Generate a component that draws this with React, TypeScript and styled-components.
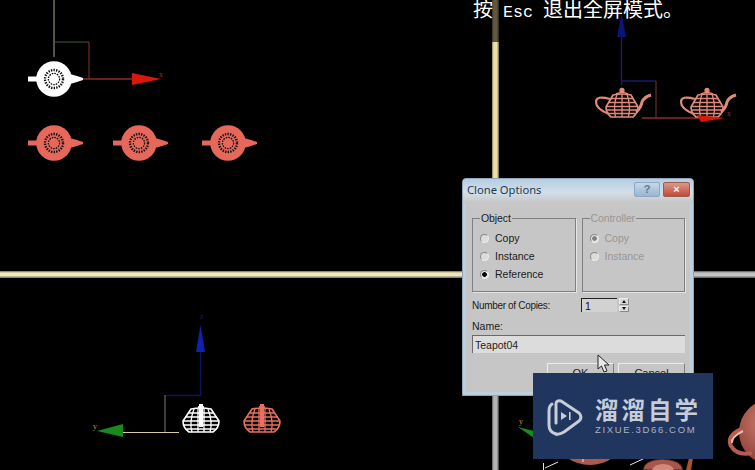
import React from "react";
import styled, { createGlobalStyle } from "styled-components";

const GlobalStyle = createGlobalStyle`
  html, body {
    margin: 0;
    padding: 0;
    background: #000;
  }
`;

const Stage = styled.div`
  position: relative;
  width: 755px;
  height: 470px;
  overflow: hidden;
  background: #000;
  display: grid;
  grid-template-columns: 492px 7px 256px;
  grid-template-rows: 271px 7px 192px;
`;

const Viewport = styled.svg`
  display: block;
  width: 100%;
  height: 100%;
`;

const VBar = styled.div<{ $tone: "cream" | "grey" }>`
  background: ${(p) =>
    p.$tone === "cream"
      ? "linear-gradient(90deg, rgba(0,0,0,0.45) 0, transparent 25%, transparent 70%, rgba(0,0,0,0.6) 100%), linear-gradient(180deg, #5e5940 0, #5e5940 42px, #ece1a4 42px, #ece1a4 100%)"
      : "linear-gradient(90deg, #555 0, #b4b4b4 25%, #b4b4b4 70%, #333 100%)"};
`;

const HBar = styled.div<{ $tone: "cream" | "grey" }>`
  background: ${(p) =>
    p.$tone === "cream"
      ? "linear-gradient(180deg, #6e6a4c 0, #efe8bc 28%, #efe8bc 65%, #6e6a4c 100%)"
      : "linear-gradient(180deg, #555 0, #c4c4c4 28%, #c4c4c4 65%, #555 100%)"};
`;

const Caption = styled.div`
  position: absolute;
  left: 473px;
  top: 0;
  color: #fff;
  font-family: "Noto Sans CJK SC", sans-serif;
  font-size: 20px;
  line-height: 18px;
  white-space: pre;
`;

const CaptionLatin = styled.span`
  font-family: "Liberation Mono", monospace;
  font-size: 16.67px;
`;

const Dialog = styled.div`
  position: absolute;
  left: 462px;
  top: 178px;
  width: 232px;
  height: 218px;
  box-sizing: border-box;
  display: flex;
  flex-direction: column;
  background: #c6c6c6;
  border: 1px solid #8fa4b6;
  border-radius: 4px 4px 0 0;
  box-shadow: inset 3px 0 0 #bcd0e0, inset -3px 0 0 #bcd0e0, inset 0 -3px 0 #bcd0e0;
  font-family: "Liberation Sans", Arial, sans-serif;
  font-size: 10px;
  color: #1c1c1c;
`;

const TitleBar = styled.div`
  flex: none;
  height: 24px;
  display: flex;
  align-items: center;
  gap: 3px;
  padding: 0 3px 4px 4px;
  box-sizing: border-box;
  background: linear-gradient(180deg, #b3cde3 0, #d3dfe8 55%, #c6c6c6 100%);
  border-radius: 3px 3px 0 0;
`;

const TitleText = styled.div`
  flex: 1;
  font-family: "Noto Sans", sans-serif;
  font-size: 11.2px;
  color: #1d3b52;
`;

const CaptionButton = styled.div<{ $kind: "help" | "close" }>`
  width: ${(p) => (p.$kind === "help" ? "26px" : "27px")};
  height: 15px;
  box-sizing: border-box;
  display: flex;
  align-items: center;
  justify-content: center;
  border: 1px solid ${(p) => (p.$kind === "help" ? "#8fa9c2" : "#9c5a50")};
  border-radius: 2px;
  color: ${(p) => (p.$kind === "help" ? "#64788c" : "#f4f4f4")};
  font-weight: bold;
  font-size: 11px;
  background: ${(p) =>
    p.$kind === "help"
      ? "linear-gradient(180deg, #c4d8ea, #98b6d2)"
      : "linear-gradient(180deg, #dc9a88, #c04a38)"};
`;

const DialogBody = styled.div`
  flex: 1;
  display: flex;
  flex-direction: column;
  padding: 9px 8px 0 9px;
`;

const GroupRow = styled.div`
  display: flex;
  gap: 6px;
`;

const Group = styled.fieldset<{ $disabled?: boolean }>`
  flex: 1;
  margin: 0;
  height: 80px;
  box-sizing: border-box;
  padding: 5px 0 0 7px;
  min-width: 0;
  border: 1px solid #808080;
  box-shadow: 1px 1px 0 #e4e4e4;
  display: flex;
  flex-direction: column;
  color: ${(p) => (p.$disabled ? "#969696" : "inherit")};
`;

const GroupLegend = styled.legend`
  padding: 0 1px;
  margin-left: 0;
  font-size: 10.5px;
  line-height: 12px;
  letter-spacing: -0.1px;
`;

const RadioRow = styled.div`
  height: 18px;
  display: flex;
  align-items: center;
  gap: 6px;
  font-size: 10.5px;
`;

const RadioDot = styled.span<{ $checked?: boolean; $disabled?: boolean }>`
  width: 9px;
  height: 9px;
  box-sizing: border-box;
  border-radius: 50%;
  border: 1px solid #8a8a8a;
  border-right-color: #ececec;
  border-bottom-color: #ececec;
  background: ${(p) =>
    p.$checked
      ? `radial-gradient(circle, ${p.$disabled ? "#808080" : "#000"} 0 2px, #e2e2e2 2.6px)`
      : "#dcdcdc"};
`;

const CopiesRow = styled.div`
  display: flex;
  align-items: center;
  margin-top: 6px;
  height: 14px;
`;

const CopiesLabel = styled.label`
  width: 109px;
  font-size: 10px;
  letter-spacing: -0.32px;
`;

const CopiesInput = styled.input`
  width: 36px;
  height: 14px;
  box-sizing: border-box;
  padding: 0 0 0 3px;
  margin: 0 2px 0 0;
  border: none;
  border-top: 1px solid #222;
  border-left: 1px solid #222;
  background: #d2d2d2;
  font: 10.5px "Liberation Sans", Arial, sans-serif;
  color: #111;
  outline: none;
`;

const Spinner = styled.div`
  width: 10px;
  height: 14px;
  display: flex;
  flex-direction: column;
  gap: 1px;
`;

const SpinStep = styled.div<{ $dir: "up" | "down" }>`
  flex: 1;
  display: flex;
  align-items: center;
  justify-content: center;
  background: #dadada;
  border: 1px solid #8c8c8c;
  border-left-color: #eee;
  border-top-color: #eee;
  &::before {
    content: "";
    border-left: 2px solid transparent;
    border-right: 2px solid transparent;
    ${(p) => (p.$dir === "up" ? "border-bottom: 3px solid #111;" : "border-top: 3px solid #111;")}
  }
`;

const NameLabel = styled.label`
  margin-top: 8px;
  line-height: 12px;
  font-size: 10.5px;
`;

const NameInput = styled.input`
  width: 213px;
  height: 18px;
  margin: 3px 0 0;
  box-sizing: border-box;
  padding: 0 0 0 2px;
  border: none;
  border-top: 1px solid #6a6a6a;
  border-left: 1px solid #6a6a6a;
  background: #dcdcdc;
  font: 10.5px "Liberation Sans", Arial, sans-serif;
  color: #222;
  outline: none;
`;

const ButtonRow = styled.div`
  display: flex;
  gap: 4px;
  margin: 10px 0 0 75px;
`;

const PushButton = styled.button`
  width: 67px;
  height: 20px;
  padding: 0;
  background: #c6c6c6;
  border: 1px solid #ececec;
  border-right-color: #808080;
  border-bottom-color: #808080;
  font: 11px "Liberation Sans", Arial, sans-serif;
  color: #1c1c1c;
`;

const Pointer = styled.svg`
  position: absolute;
  left: 597px;
  top: 354px;
  width: 13px;
  height: 19px;
`;

const Watermark = styled.div`
  position: absolute;
  left: 533px;
  top: 373px;
  width: 180px;
  height: 86px;
  box-sizing: border-box;
  background: #21365f;
  display: flex;
  align-items: center;
  gap: 11px;
  padding: 0 0 1px 14px;
  color: #c6ccd8;
`;

const LogoMark = styled.svg`
  flex: none;
  width: 37px;
  height: 38px;
  margin-top: 2px;
`;

const BrandText = styled.div`
  display: flex;
  flex-direction: column;
  gap: 5px;
`;

const BrandName = styled.div`
  font-family: "Noto Sans CJK SC", sans-serif;
  font-weight: bold;
  font-size: 23.5px;
  line-height: 22px;
  letter-spacing: 3px;
  white-space: nowrap;
`;

const BrandUrl = styled.div`
  font-family: "Liberation Sans", Arial, sans-serif;
  font-size: 9.5px;
  line-height: 9px;
  letter-spacing: 1.65px;
  white-space: nowrap;
  color: #aab3c6;
`;

const AxisLabel = styled.text`
  font-family: "Liberation Serif", serif;
  font-size: 8px;
`;

const SALMON = "#e6685a";
const WIRE = "#e08a7a";

function TopTeapot({ x, y, color }: { x: number; y: number; color: string }) {
  return (
    <g transform={`translate(${x} ${y})`}>
      <rect x={-26} y={-2.5} width={10} height={5} fill={color} />
      <polygon points="16,-5 23,-3 29,-1 29,1 23,3 16,5" fill={color} />
      <circle r={17.8} fill={color} />
      <circle r={9} fill="none" stroke="#111" strokeWidth={2.4} strokeDasharray="1.4 1.2" />
      <circle r={5.6} fill="none" stroke="#111" strokeWidth={1.3} strokeDasharray="1.6 1" />
    </g>
  );
}

function SideTeapot({ x, y }: { x: number; y: number }) {
  return (
    <g transform={`translate(${x} ${y})`} fill="none" stroke={WIRE} strokeWidth={1.3}>
      <path d="M-9 -9 L-16 3 Q-16 9 -11 13 H11 Q16 9 16 3 L9 -9 Q0 -11 -9 -9Z" strokeWidth={1.7} />
      <path d="M-11 -5.5 H11 M-14 -1.5 H14 M-16 2.5 H16 M-15.5 6 H15.5 M-13.5 9.5 H13.5" />
      <path d="M-5 -10 Q-9 2 -6.5 13 M0 -10 V13 M5 -10 Q9 2 6.5 13" />
      <path d="M-12 -5 Q-26 -9 -26 -2 Q-26 5 -13 10" strokeWidth={2.2} />
      <path d="M14 8 Q19 4 20 -2 Q22 -7 29 -9" strokeWidth={3} />
      <path d="M-6 -10 Q0 -13 6 -10" strokeWidth={1.6} />
      <circle cy={-13.5} r={2} fill={WIRE} />
    </g>
  );
}

function FrontTeapot({ x, color }: { x: number; color: string }) {
  return (
    <g transform={`translate(${x} 420)`} fill="none" stroke={color} strokeWidth={1.3}>
      <path d="M-10 -11 L-18 1 Q-18 8 -12 12 H12 Q18 8 18 1 L10 -11 Q0 -13 -10 -11Z" strokeWidth={1.6} />
      <path d="M-13 -7 H13 M-16 -3 H16 M-17.5 1 H17.5 M-17 5 H17 M-14.5 9 H14.5" />
      <path d="M-7 -11 Q-12 2 -9 12 M-3 -12 V12 M3 -12 V12 M7 -11 Q12 2 9 12" />
      <path d="M0 -16 V7" strokeWidth={4} />
      <path d="M-3 -13 H3" strokeWidth={1.8} />
    </g>
  );
}

export default function App() {
  return (
    <Stage>
      <GlobalStyle />

      <Viewport viewBox="0 0 492 271">
        <path d="M54 0 V57" stroke="#7b786a" strokeWidth={1.4} />
        <path d="M54 42 H89" stroke="#3f5a3c" strokeWidth={1.2} />
        <path d="M89 42 V79" stroke="#6e2a28" strokeWidth={1.2} />
        <path d="M76 79 H134" stroke="#8a2a22" strokeWidth={1.4} />
        <polygon points="132,73 161,79 132,85" fill="#d8180f" />
        <AxisLabel x={159} y={77} fill="#8a3a30">x</AxisLabel>
        <TopTeapot x={54} y={79} color="#fff" />
        <TopTeapot x={54} y={143} color={SALMON} />
        <TopTeapot x={139} y={143} color={SALMON} />
        <TopTeapot x={228} y={143} color={SALMON} />
      </Viewport>
      <VBar $tone="cream" />
      <Viewport viewBox="499 0 256 271">
        <polygon points="621.5,13 626,37 617,37" fill="#0c1478" />
        <path d="M621.5 37 V85" stroke="#1a1a6e" strokeWidth={1.4} />
        <path d="M621.5 81 H656" stroke="#16186e" strokeWidth={1.4} />
        <path d="M656 81 V118" stroke="#6a2c2c" strokeWidth={1.2} />
        <path d="M642 118 H700" stroke="#8a2c2a" strokeWidth={1.3} />
        <SideTeapot x={622} y={104} />
        <SideTeapot x={707} y={104} />
        <polygon points="697,115 725,118 701,122" fill="#d8180f" />
        <AxisLabel x={727} y={116} fill="#7a3a34">x</AxisLabel>
      </Viewport>

      <HBar $tone="cream" />
      <VBar $tone="grey" />
      <HBar $tone="grey" />

      <Viewport viewBox="0 278 492 192">
        <polygon points="200.5,325 205,352 196,352" fill="#1020b0" />
        <AxisLabel x={200} y={319} fill="#1a1a60">z</AxisLabel>
        <path d="M200.5 352 V396" stroke="#10105e" strokeWidth={1.4} />
        <path d="M165 395.5 H200" stroke="#14145e" strokeWidth={1.5} />
        <path d="M165 395 V432" stroke="#6a6a5c" strokeWidth={1.2} />
        <path d="M123 432.5 H179" stroke="#dcc8a4" strokeWidth={1.2} />
        <polygon points="97,431 123,424 123,437" fill="#1a8a1c" />
        <AxisLabel x={93} y={429} fill="#a89e58">y</AxisLabel>
        <FrontTeapot x={201} color="#fff" />
        <FrontTeapot x={262} color="#e8705e" />
      </Viewport>
      <VBar $tone="grey" />
      <Viewport viewBox="499 278 256 192">
        <defs>
          <radialGradient id="clay" cx="45%" cy="35%" r="70%">
            <stop offset="0" stopColor="#d08070" />
            <stop offset="1" stopColor="#8a3a34" />
          </radialGradient>
        </defs>
        <polygon points="518,427 534,431 534,438" fill="#1a8a1c" />
        <AxisLabel x={519} y={424} fill="#a89e58">y</AxisLabel>
        <ellipse cx={590} cy={440} rx={32} ry={25} fill="#b0584c" />
        <path d="M662 459 Q644 460 643 470 H683 Q682 460 662 459Z" fill="#a8554a" stroke="#3a1c18" strokeWidth={1} />
        <path d="M652 470 Q654 464 663 464 Q672 464 674 470Z" fill="#d08a7c" />
        <path d="M689 458 L693 458 L691 470 L686 470Z" fill="#a85230" />
        <circle cx={772} cy={432} r={33} fill="url(#clay)" />
        <path d="M741 429 Q726 436 731 446 Q737 456 752 453" fill="none" stroke="#b85c4e" strokeWidth={4} />
        <path d="M743 431 Q731 437 732 443" fill="none" stroke="#ecc0b0" strokeWidth={2} />
        <path d="M543.5 463 V470 M545 468 L558 462 M630 465 L645 458 M583 458 V462" stroke="#e8e8e8" strokeWidth={1} fill="none" />
      </Viewport>

      <Caption>
        按<CaptionLatin> Esc </CaptionLatin>退出全屏模式。
      </Caption>

      <Dialog>
        <TitleBar>
          <TitleText>Clone Options</TitleText>
          <CaptionButton $kind="help">?</CaptionButton>
          <CaptionButton $kind="close">×</CaptionButton>
        </TitleBar>
        <DialogBody>
          <GroupRow>
            <Group>
              <GroupLegend>Object</GroupLegend>
              <RadioRow><RadioDot />Copy</RadioRow>
              <RadioRow><RadioDot />Instance</RadioRow>
              <RadioRow><RadioDot $checked />Reference</RadioRow>
            </Group>
            <Group $disabled>
              <GroupLegend>Controller</GroupLegend>
              <RadioRow><RadioDot $checked $disabled />Copy</RadioRow>
              <RadioRow><RadioDot $disabled />Instance</RadioRow>
            </Group>
          </GroupRow>
          <CopiesRow>
            <CopiesLabel>Number of Copies:</CopiesLabel>
            <CopiesInput readOnly value="1" />
            <Spinner>
              <SpinStep $dir="up" />
              <SpinStep $dir="down" />
            </Spinner>
          </CopiesRow>
          <NameLabel>Name:</NameLabel>
          <NameInput readOnly value="Teapot04" />
          <ButtonRow>
            <PushButton>OK</PushButton>
            <PushButton>Cancel</PushButton>
          </ButtonRow>
        </DialogBody>
      </Dialog>

      <Pointer viewBox="0 0 13 19">
        <path d="M1 1 V15 L4.5 12 L7 18 L10 17 L7.5 11 H12 Z" fill="#e8e8e8" stroke="#222" strokeWidth={1} />
      </Pointer>

      <Watermark>
        <LogoMark viewBox="0 0 37 38">
          <g fill="none" stroke="#c6ccd8" strokeWidth={3} strokeLinecap="round" strokeLinejoin="round">
            <path d="M5 6 Q2 8 2 13 V27 Q2 34 9 36" />
            <path d="M9 25 V6 Q9 2 14 3 L32 15 Q36 19 32 23 L17 34 Q12 37 9 36" />
          </g>
          <polygon points="14,14 20,18 14,22" fill="#c6ccd8" />
          <rect x={22} y={14} width={1.6} height={8} fill="#c6ccd8" />
        </LogoMark>
        <BrandText>
          <BrandName>溜溜自学</BrandName>
          <BrandUrl>ZIXUE.3D66.COM</BrandUrl>
        </BrandText>
      </Watermark>
    </Stage>
  );
}
